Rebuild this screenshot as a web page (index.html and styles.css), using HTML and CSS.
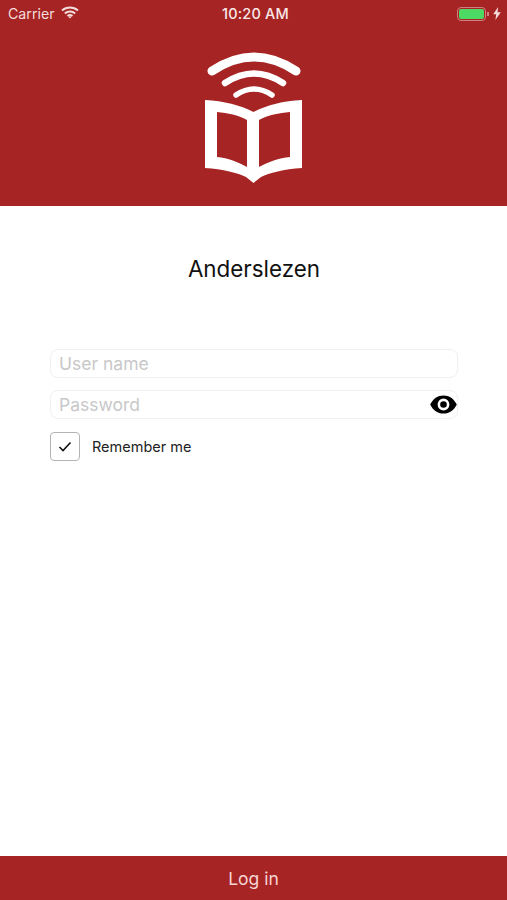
FILE: index.html
```html
<!DOCTYPE html>
<html lang="en">
<head>
<meta charset="utf-8">
<title>Anderslezen</title>
<link rel="stylesheet" href="styles.css">
</head>
<body>
<div class="app">
  <header class="header">
    <div class="status">
      <div class="status-left">
        <span>Carrier</span>
        <svg class="wifi" width="18" height="13" viewBox="0 0 18 13"><path d="M1 4.600C5.600.6 12.400.6 17 4.600M3.800 7.400c3-2.600 7.400-2.600 10.400 0M6.500 10c1.500-1.200 3.500-1.200 5 0" fill="none" stroke="#f3dcdc" stroke-width="2"/><path d="M7.300 10.700 9 12.500l1.700-1.800c-1-.7-2.400-.7-3.400 0z" fill="#f3dcdc"/></svg>
      </div>
      <span class="status-time">10:20 AM</span>
      <div class="status-right">
        <span class="battery"><span class="battery-fill"></span></span>
        <span class="battery-nub"></span>
        <svg width="8" height="13" viewBox="0 0 7 12"><path d="M4.500 0 0 6.800h2.800L2 12l5-7.200H4z" fill="#f3dcdc"/></svg>
      </div>
    </div>
    <svg class="logo" width="98" height="134" viewBox="0 0 98 134">
      <g fill="none" stroke="#fff" stroke-linecap="round">
        <path d="M7 21Q49-7 91 21" stroke-width="9"/>
        <path d="M20 33Q49 14 78 33" stroke-width="6.500"/>
        <path d="M31 45Q49 33 67 45" stroke-width="5.500"/>
      </g>
      <path fill="#fff" fill-rule="evenodd" d="M0 50C19 51 35 55 48.500 62 62 55 78 51 97 50V118C79 119 64 123 56 127L48.500 133 41 127C33 123 18 119 0 118ZM12 62V107C23 108 33 112 42 117V70C33 65 23 63 12 62ZM85 62C74 63 63 65 54 70V117C63 112 74 108 85 107Z"/>
    </svg>
  </header>
  <main class="main">
    <h1 class="title">Anderslezen</h1>
    <form class="form">
      <div class="field"><span class="placeholder">User name</span></div>
      <div class="field">
        <span class="placeholder">Password</span>
        <svg class="eye" width="27" height="19" viewBox="0 0 28 20"><path fill-rule="evenodd" d="M0 10C3 3.800 8 .5 14 .5S25 3.800 28 10C25 16.200 20 19.500 14 19.500S3 16.200 0 10ZM14 3.800A6.200 6.200 0 1 0 14 16.200 6.200 6.200 0 1 0 14 3.800ZM14 6.500A3.500 3.500 0 1 1 14 13.500 3.500 3.500 0 1 1 14 6.500Z"/></svg>
      </div>
      <div class="remember">
        <span class="checkbox"><svg width="14" height="11" viewBox="0 0 14 11"><path d="M1.500 6 5 9.500 12.500 1.500" fill="none" stroke="#111" stroke-width="1.600"/></svg></span>
        <span class="remember-label">Remember me</span>
      </div>
    </form>
  </main>
  <footer class="footer">Log in</footer>
</div>
</body>
</html>
```
FILE: styles.css
```css
* { box-sizing: border-box; }
html, body { margin: 0; padding: 0; }
body { font-family: "Liberation Sans", Arial, sans-serif; background: #fff; }
.app { height: 900px; display: flex; flex-direction: column; overflow: hidden; }
.header { height: 205.500px; background: #a72424; display: flex; flex-direction: column; align-items: center; flex: none; }
.status { width: 100%; height: 27px; padding: 0 6px 0 8px; display: flex; align-items: center; justify-content: space-between; position: relative; font-family: Inter, "Liberation Sans", sans-serif; font-size: 14.200px; color: #f3dcdc; }
.status-left { display: flex; align-items: center; gap: 6px; }
.wifi { margin-top: -2px; }
.status-time { position: absolute; left: 4px; right: 0; text-align: center; font-weight: 500; font-size: 14.500px; letter-spacing: .2px; color: #f8e8e8; }
.status-right { display: flex; align-items: center; gap: 1px; }
.battery { width: 29px; height: 14px; border: 1px solid #cf8080; border-radius: 4px; padding: 1px; display: block; }
.battery-fill { display: block; height: 100%; background: #4cd964; border-radius: 2px; }
.battery-nub { width: 2px; height: 4px; background: #cf8080; margin-right: 3px; }
.logo { margin-top: 23px; margin-left: 1px; }
.main { flex: 1; padding: 0 49px 0 50px; }
.title { margin: 49.500px 0 0; height: 28px; line-height: 28px; text-align: center; font-family: Inter, "Liberation Sans", sans-serif; font-weight: 400; font-size: 22.400px; color: #111; }
.form { margin-top: 66px; display: flex; flex-direction: column; gap: 12px; }
.field { height: 29px; border: 1px solid #f0f0f0; border-radius: 8px; padding: 0 8px 1px 8px; display: flex; align-items: center; justify-content: space-between; position: relative; }
.placeholder { font-family: Inter, "Liberation Sans", sans-serif; font-size: 17.500px; color: #c8c8c8; }
.eye { position: absolute; right: 0; top: 4px; }
.remember { display: flex; align-items: center; gap: 12px; margin-top: 1px; }
.checkbox { width: 30px; height: 29px; border: 1px solid #b4b4b4; border-radius: 4px; display: flex; align-items: center; justify-content: center; }
.remember-label { font-family: Inter, "Liberation Sans", sans-serif; font-size: 14.500px; color: #222; }
.footer { height: 44px; flex: none; background: #a72424; color: #f6d4d4; display: flex; align-items: center; justify-content: center; font-family: Inter, "Liberation Sans", sans-serif; font-size: 17.500px; }
```
